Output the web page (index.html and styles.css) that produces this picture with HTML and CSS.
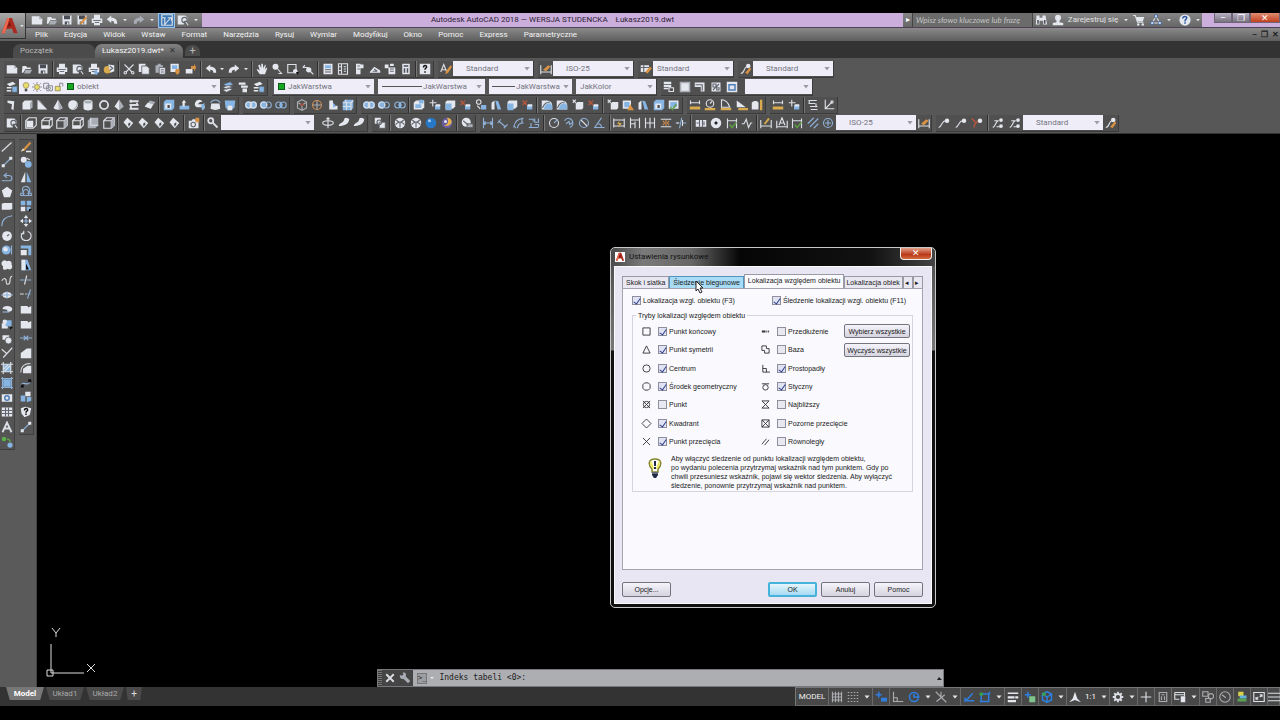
FILE: index.html
```
<!DOCTYPE html>
<html lang="pl">
<head>
<meta charset="utf-8">
<title>Autodesk AutoCAD 2018</title>
<link rel="stylesheet" href="styles.css">
</head>
<body>
<svg class="defs" aria-hidden="true">
<symbol id="new" viewBox="0 0 16 16"><path class="w" d="M1 3h10l4 4v7H1z"/><path class="g" d="M11 3v4h4z"/></symbol>
<symbol id="open" viewBox="0 0 16 16"><path class="w" d="M2 4h5l1 2h5v2H6l-3 5H1z"/><path class="g" d="M6 9h9l-3 5H4z"/></symbol>
<symbol id="save" viewBox="0 0 16 16"><path class="w" d="M2 2h12v12H2z"/><path class="d" d="M4 2h8v5H4zM5 10h6v4H5z"/><path class="w" d="M8 11h2v3H8z"/></symbol>
<symbol id="saveas" viewBox="0 0 16 16"><use href="#save"/><path class="o" d="M6 11L13 3l2 2-7 8-3 1z"/></symbol>
<symbol id="print" viewBox="0 0 16 16"><path class="w" d="M4 1h8v5h3v6h-3v3H4v-3H1V6h3z"/><path class="d" d="M3 8h10v1H3zM5 11h6v1H5z"/></symbol>
<symbol id="preview" viewBox="0 0 16 16"><path class="w" d="M1 2h10l3 3v4H9v5H1z"/><circle class="ld" cx="10" cy="8" r="3.5"/><path class="lw" d="M12 11l3 4"/></symbol>
<symbol id="ws" viewBox="0 0 16 16"><path class="lw" d="M1 1h14v14H1zM1 5h5M5 5v10M5 14l8-9M9 5h5v4"/></symbol>
<symbol id="publish" viewBox="0 0 16 16"><use href="#print"/><path class="b" d="M9 9h3v3h3l-4 4-4-4h2z"/></symbol>
<symbol id="globe" viewBox="0 0 16 16"><circle class="y" cx="6" cy="9" r="5"/><path class="w" d="M7 2l8 1v8l-5 2z"/><path class="ld" d="M9 4l4 3-4 3"/></symbol>
<symbol id="cut" viewBox="0 0 16 16"><path class="lw" d="M2 2l10 10M14 2L4 12"/><circle class="lw" cx="3" cy="13" r="1.6"/><circle class="lw" cx="13" cy="13" r="1.6"/></symbol>
<symbol id="copy" viewBox="0 0 16 16"><path class="w" d="M1 1h9v11H1z"/><path class="w e" d="M5 4h7l3 3v8H5z"/></symbol>
<symbol id="paste" viewBox="0 0 16 16"><path class="g" d="M2 3h3V1h4v2h3v10H2z"/><path class="w e" d="M7 6h8v9H7z"/><path class="ld" d="M9 9h4M9 12h4"/></symbol>
<symbol id="match" viewBox="0 0 16 16"><path class="w" d="M2 1h11v11H2z"/><path class="b" d="M4 3h7v5H4z"/><path class="o" d="M9 8h5v5l-3 3-3-4z"/></symbol>
<symbol id="blk" viewBox="0 0 16 16"><path class="w" d="M1 8h9v6H1z"/><path class="o" d="M8 4h4V1l3 5-3 5V8H8z"/></symbol>
<symbol id="undo" viewBox="0 0 16 16"><path class="w" d="M1 7l6-5v3c6 0 8 3 8 8h-4c0-3-1-4-4-4v3z"/></symbol>
<symbol id="redo" viewBox="0 0 16 16"><path class="w" d="M15 7L9 2v3c-6 0-8 3-8 8h4c0-3 1-4 4-4v3z"/></symbol>
<symbol id="redo-off" viewBox="0 0 16 16"><path class="g" d="M15 7L9 2v3c-6 0-8 3-8 8h4c0-3 1-4 4-4v3z"/></symbol>
<symbol id="arr" viewBox="0 0 16 16"><path class="w" d="M3 5h10l-5 6z"/></symbol>
<symbol id="hand" viewBox="0 0 16 16"><path class="w" d="M5 15L1 9l1-1 3 2-2-7 2-1 2 5V1h2l1 6 2-5 1 1-1 6 2-3 1 1-3 8z"/></symbol>
<symbol id="zoomp" viewBox="0 0 16 16"><circle class="w" cx="6" cy="5" r="4"/><path class="lw" d="M9 8l5 6M10 14h5"/></symbol>
<symbol id="zoomw" viewBox="0 0 16 16"><path class="lw" d="M1 2h11v11H1z"/><circle class="w" cx="11" cy="11" r="3"/><path class="k" d="M12 12h4l-2 4z"/></symbol>
<symbol id="zoomv" viewBox="0 0 16 16"><path class="lw" d="M1 6h7M1 6l3-3"/><circle class="w" cx="9" cy="9" r="3.5"/><path class="lw" d="M11 11l4 4"/></symbol>
<symbol id="props" viewBox="0 0 16 16"><path class="w" d="M2 1h12v14H2z"/><path class="b" d="M4 3h8v4H4z"/><path class="ld" d="M4 9h8M4 12h8"/></symbol>
<symbol id="dc" viewBox="0 0 16 16"><path class="lw" d="M2 1h12v14H2zM6 1v14M9 5h3M9 8h3M9 11h3M2 5h4M2 10h4"/></symbol>
<symbol id="tp" viewBox="0 0 16 16"><path class="w" d="M4 1h6v14H4zM10 2h4v5h-4z"/><path class="ld" d="M6 4h3M6 8h3"/></symbol>
<symbol id="sheet" viewBox="0 0 16 16"><path class="w" d="M1 12l6-7 8 5v3H1z"/><path class="ld" d="M5 11h6M7 8l4 3"/></symbol>
<symbol id="mark" viewBox="0 0 16 16"><path class="w" d="M6 6h9v9H6zM1 2h5v5H1zM8 1h5v3H8z"/><path class="ld" d="M8 8h5M8 11h5"/></symbol>
<symbol id="calc" viewBox="0 0 16 16"><path class="w" d="M3 1h10v14H3z"/><path class="d" d="M5 3h6v2H5zM5 7h2v6H5zM9 7h2v6H9z"/></symbol>
<symbol id="help" viewBox="0 0 16 16"><path class="w" d="M1 1h14v14H1z"/><path class="kl" d="M6 6c0-4 5-3 4 0-1 1-2 1-2 3M8 11v2"/></symbol>
<symbol id="sty" viewBox="0 0 16 16"><path class="lw" d="M1 12L5 2l4 10M2 9h6"/><path class="o" d="M8 11l6-8 2 2-5 8-4 2z"/></symbol>
<symbol id="dimsty" viewBox="0 0 16 16"><path class="lw" d="M1 3v12M15 3v12M1 12h14"/><path class="o" d="M4 9l7-6 3 2-6 6z"/></symbol>
<symbol id="tabsty" viewBox="0 0 16 16"><path class="w" d="M1 3h11v9H1z"/><path class="ld" d="M1 6h11M5 3v9"/><path class="o" d="M7 12l6-7 3 2-6 7z"/></symbol>
<symbol id="mlsty" viewBox="0 0 16 16"><path class="lw" d="M1 14c5 0 4-8 8-9"/><circle class="w" cx="11" cy="4" r="3"/><path class="o" d="M7 13l6-7 2 2-5 7z"/></symbol>
<symbol id="lay" viewBox="0 0 16 16"><path class="w" d="M1 4l8-3 4 3-8 3zM1 8h7v2H1zM1 12h6v2H1z"/><path class="b e" d="M8 7h7v8H8z"/></symbol>
<symbol id="lay2" viewBox="0 0 16 16"><path class="b e" d="M2 4l9-3 4 4-9 3z"/><path class="w e" d="M1 8l8-2 5 2-8 3zM1 12l8-3 5 2-8 4z"/></symbol>
<symbol id="bulb" viewBox="0 0 16 16"><path class="ye" d="M8 1c5 0 6 5 2 9H6C2 6 3 1 8 1z"/><path class="d" d="M6 11h4v4H6z"/></symbol>
<symbol id="sun" viewBox="0 0 16 16"><circle class="ye" cx="8" cy="8" r="4"/><path class="ll" d="M8 0v3M8 13v3M0 8h3M13 8h3M2 2l2 2M12 12l2 2M2 14l2-2M12 4l2-2"/></symbol>
<symbol id="frz" viewBox="0 0 16 16"><path class="ll" d="M1 2h8v8H1zM6 6h9v8H6z"/><circle class="ll" cx="10" cy="10" r="2"/></symbol>
<symbol id="lock" viewBox="0 0 16 16"><path class="ye" d="M2 7h8v7H2z"/><path class="ll" d="M9 8V2h5v5"/></symbol>
<symbol id="lst" viewBox="0 0 16 16"><path class="w" d="M1 2h9v3H1zM4 6h9v3H4zM6 10h6v5H6z"/></symbol>
<symbol id="lays" viewBox="0 0 16 16"><path class="w" d="M1 1h10v3H1zM1 5h10v3H1zM1 9h6v2H1z"/><path class="lw" d="M8 9h6v5H8z"/></symbol>
<symbol id="vp1" viewBox="0 0 16 16"><path class="g" d="M1 1h14v14H1z"/><path class="w" d="M3 3h10v10H3z"/></symbol>
<symbol id="vp2" viewBox="0 0 16 16"><path class="w" d="M1 2h13v12H9V8H1z"/><path class="ld" d="M2 5h9v8"/></symbol>
<symbol id="vp3" viewBox="0 0 16 16"><path class="w" d="M2 2h12v12H2z"/><path class="ld" d="M4 12l8-8M4 4h4v4H4zM9 9h3v3H9z"/></symbol>
<symbol id="vp4" viewBox="0 0 16 16"><path class="w" d="M1 1h14v14H1z"/><path fill="#4f7fb8" d="M3 4h10v9H3z"/><path class="w" d="M5 6h6v5H5z"/></symbol>
<symbol id="poly" viewBox="0 0 16 16"><path class="w" d="M2 2l9 1-1 12-3-2 1-6-6-2z"/></symbol>
<symbol id="box" viewBox="0 0 16 16"><path class="w" d="M2 5l3-3h10v9l-3 3H2z"/><path class="g" d="M12 5l3-3v9l-3 3z"/></symbol>
<symbol id="wedge" viewBox="0 0 16 16"><path class="w" d="M2 1l13 13H2z"/><path class="g" d="M2 1l3 1 10 12z"/></symbol>
<symbol id="cone" viewBox="0 0 16 16"><path class="w" d="M8 1l6 11c-2 3-10 3-12 0z"/><path class="g" d="M8 1l6 11c-1 2-3 2-5 2z"/></symbol>
<symbol id="sph" viewBox="0 0 16 16"><circle class="w" cx="8" cy="8" r="6.5"/><path class="g" d="M13 4c3 5-1 11-7 10 5-1 7-5 7-10z"/></symbol>
<symbol id="cyl" viewBox="0 0 16 16"><path class="w" d="M2 4c0-4 12-4 12 0v9c-2 3-10 3-12 0z"/><ellipse class="g" cx="8" cy="4" rx="5" ry="2"/></symbol>
<symbol id="tor" viewBox="0 0 16 16"><circle class="lw2" cx="8" cy="8" r="5.5"/></symbol>
<symbol id="pyr" viewBox="0 0 16 16"><path class="w" d="M8 1l6 9-6 5-6-5z"/><path class="g" d="M8 1l6 9-6 5z"/></symbol>
<symbol id="hel" viewBox="0 0 16 16"><path class="lw2" d="M2 3h12M2 8h12M2 13h12M4 1v4M12 5v4M4 9v5"/></symbol>
<symbol id="pla" viewBox="0 0 16 16"><path class="g" d="M1 10l7-8 7 2-6 9z"/><path class="w" d="M1 10l4-5 7 2-3 6z"/></symbol>
<symbol id="ext" viewBox="0 0 16 16"><path class="b" d="M1 4l3-3h11v11l-3 3H1z"/><path class="w" d="M3 6h8v7H3z"/><path class="d" d="M6 8h3v4H6z"/></symbol>
<symbol id="pp" viewBox="0 0 16 16"><path class="b" d="M2 9h13v5H2z"/><path class="w" d="M8 1l3 4H9v5H6V5H5z"/></symbol>
<symbol id="swp" viewBox="0 0 16 16"><path class="w" d="M2 4c2-4 8-4 9 0H8L5 7h6c5 1 4 7 0 8l1-4H4C0 9 1 6 2 4z"/><path class="b" d="M9 9l5-4v7l-3 3z"/></symbol>
<symbol id="rev" viewBox="0 0 16 16"><path class="w" d="M3 6h11l1 7c-4 2-9 2-13 0z"/><path class="lb" d="M2 5c3-5 10-5 13 0"/></symbol>
<symbol id="loft" viewBox="0 0 16 16"><path class="b" d="M1 2h14l-1 9-4 4H5l-3-4z"/><path class="w" d="M5 9h6v6H5z"/></symbol>
<symbol id="uni" viewBox="0 0 16 16"><circle class="b" cx="5" cy="8" r="5"/><circle class="b" cx="11" cy="8" r="5"/><circle class="lw" cx="5" cy="8" r="4"/><circle class="lw" cx="11" cy="8" r="4"/></symbol>
<symbol id="sub" viewBox="0 0 16 16"><circle class="b" cx="5" cy="8" r="5"/><circle class="lw" cx="5" cy="8" r="4"/><circle class="lb" cx="11" cy="8" r="4"/></symbol>
<symbol id="int" viewBox="0 0 16 16"><circle class="lb" cx="5" cy="8" r="4"/><circle class="lb" cx="11" cy="8" r="4"/><path class="b" d="M8 4c3 3 3 5 0 8-3-3-3-5 0-8z"/></symbol>
<symbol id="gmv" viewBox="0 0 16 16"><path class="lg" d="M8 1l6 3v8l-6 3-6-3V4zM8 8v6M8 8l5-3M8 8L3 5"/><path class="r" d="M6 6h4v3H6z"/></symbol>
<symbol id="gro" viewBox="0 0 16 16"><circle class="lo" cx="8" cy="8" r="6"/><path class="lg" d="M2 8h12M8 2v12"/></symbol>
<symbol id="ell" viewBox="0 0 16 16"><path class="w" d="M3 2h5v7h6v5H3z"/><path class="b" d="M8 5l3 3v3H8z"/></symbol>
<symbol id="arr3" viewBox="0 0 16 16"><path class="b" d="M1 4l3-3h11v11l-3 3H1z"/><path class="lw" d="M1 5h11v10M6 5v10M1 10h11M12 5l3-3M5 1v4"/></symbol>
<symbol id="fc1" viewBox="0 0 16 16"><path class="w" d="M1 5l3-3h11v9l-3 3H1z"/><path class="b" d="M3 7h8v5H3zM8 1h6v5H8z"/></symbol>
<symbol id="fc2" viewBox="0 0 16 16"><path class="lw" d="M5 1v9M1 5h9"/><path class="b" d="M8 8h7v6H8z"/><path class="w" d="M9 7h6v3H9z"/></symbol>
<symbol id="fc3" viewBox="0 0 16 16"><path class="w" d="M2 4l2-2h11v8l-3 3H2z"/><path class="b" d="M2 6h8v9H2z"/></symbol>
<symbol id="fc4" viewBox="0 0 16 16"><path class="lr" d="M2 2l6 6M8 2L2 8"/><path class="b" d="M8 8h7v6H8z"/><path class="w" d="M9 7h6v3H9z"/></symbol>
<symbol id="fc5" viewBox="0 0 16 16"><circle class="lw" cx="5" cy="4" r="3"/><path class="b" d="M8 8h7v6H8z"/><path class="lw" d="M3 9l4 4"/></symbol>
<symbol id="fc6" viewBox="0 0 16 16"><path class="w" d="M2 14V5l4-3v12z"/><path class="b" d="M7 2l4 1 4 11h-5z"/></symbol>
<symbol id="fil" viewBox="0 0 16 16"><path class="w" d="M1 2h7c5 0 7 4 7 7v5H1z"/><path class="b" d="M4 14C4 8 8 5 13 6l2 3v5z"/><path class="ld" d="M2 12C4 6 7 4 12 4"/></symbol>
<symbol id="shell" viewBox="0 0 16 16"><path class="lw" d="M1 1l4 4M5 1L1 5"/><path class="w" d="M5 6l2-2h8v8l-2 2H5z"/></symbol>
<symbol id="warn" viewBox="0 0 16 16"><path class="w" d="M1 2h11v11H1z"/><path class="b" d="M3 4h7v7H3z"/><path class="o" d="M11 7l5 8H7z"/></symbol>
<symbol id="chk" viewBox="0 0 16 16"><path class="w" d="M1 2h13v11H1z"/><path class="b" d="M3 4h9v7H3z"/><path class="lgr" d="M3 11l3 3 5-7"/></symbol>
<symbol id="dist" viewBox="0 0 16 16"><path class="lw" d="M2 2v5M14 2v5M2 5h12"/><path class="y" d="M1 10h14v4H1z"/></symbol>
<symbol id="rad" viewBox="0 0 16 16"><circle class="lw" cx="8" cy="6" r="5"/><path class="lw" d="M8 6l3-3"/><path class="y" d="M1 12h14v3H1z"/></symbol>
<symbol id="ang" viewBox="0 0 16 16"><path class="lw" d="M2 11V1c6 0 9 4 11 10z"/><path class="y" d="M1 12h14v3H1z"/></symbol>
<symbol id="area" viewBox="0 0 16 16"><path class="w" d="M1 11V2l12 9z"/><path class="y" d="M3 12h13v3H3z"/></symbol>
<symbol id="vol" viewBox="0 0 16 16"><path class="w" d="M1 5c2-3 8-3 9 0v9H1z"/><path class="y" d="M12 1h3v14h-3z"/></symbol>
<symbol id="list" viewBox="0 0 16 16"><path class="lw" d="M2 2h11M2 6h9M4 10h10M5 14h9M3 2v4M12 6v5"/></symbol>
<symbol id="ucs" viewBox="0 0 16 16"><path class="lw" d="M3 1v12h12M3 13L12 4"/><circle class="lw" cx="12" cy="4" r="1.5"/></symbol>
<symbol id="v1" viewBox="0 0 16 16"><path class="lw" d="M1 5l4-4h10v10l-4 4H1z"/><path class="w" d="M2 5h9v9H2z"/></symbol>
<symbol id="v2" viewBox="0 0 16 16"><path class="lw" d="M1 5l4-4h10v10l-4 4H1zM1 5h10v10M11 5l4-4"/><path class="w" d="M1 11h10v4H1z"/></symbol>
<symbol id="v3" viewBox="0 0 16 16"><path class="lw" d="M1 5l4-4h10v10l-4 4H1zM1 5h10v10M11 5l4-4"/><path class="g" d="M11 5l4-4v10l-4 4z"/></symbol>
<symbol id="v4" viewBox="0 0 16 16"><path class="g" d="M1 5l4-4h10v10l-4 4H1z"/><path class="lw" d="M5 1v10h10"/></symbol>
<symbol id="iso" viewBox="0 0 16 16"><path class="w" d="M7 1l8 7-6 7-7-8z"/><path class="d" d="M8 9l3-2v3l-2 3z"/></symbol>
<symbol id="cam" viewBox="0 0 16 16"><path class="w" d="M1 5h4l1-2h4v2h4v10H1z"/><circle class="ld" cx="7" cy="10" r="3"/><path class="o" d="M10 1h5v6h-5z"/></symbol>
<symbol id="mag" viewBox="0 0 16 16"><circle class="lw2" cx="5" cy="5" r="3.4"/><path class="lw2" d="M8 8l6 6"/></symbol>
<symbol id="orb" viewBox="0 0 16 16"><ellipse class="lw" cx="8" cy="8" rx="7" ry="3"/><path class="lw" d="M8 1v14M6 3l2-2 2 2"/></symbol>
<symbol id="fly" viewBox="0 0 16 16"><path class="w" d="M1 12c1-5 5-3 7-8l7-2c0 7-6 10-14 10z"/><circle class="w" cx="11" cy="4" r="3"/></symbol>
<symbol id="shp" viewBox="0 0 16 16"><path class="w" d="M1 1h8v8H1z"/><path class="w e" d="M7 7h8v8H7z"/><circle class="ld" cx="7" cy="7" r="3"/></symbol>
<symbol id="wire" viewBox="0 0 16 16"><circle class="w" cx="8" cy="8" r="7"/><path class="ld" d="M3 4c4 4 6 4 10 0M2 10c4-4 8-4 12 0M8 8v6"/></symbol>
<symbol id="blue" viewBox="0 0 16 16"><circle fill="#2878c8" cx="8" cy="8" r="7"/><circle fill="#9fcbf4" cx="6" cy="5" r="2"/></symbol>
<symbol id="real" viewBox="0 0 16 16"><circle fill="#695aa0" cx="8" cy="8" r="7"/><path fill="#e5b24d" d="M8 1c4 0 7 3 6 7-2 4-7 5-10 3 5 0 7-5 4-10z"/><circle class="w" cx="6" cy="6" r="2"/></symbol>
<symbol id="msph" viewBox="0 0 16 16"><circle class="w" cx="7" cy="7" r="6"/><path class="g e" d="M8 9h8v5H8z"/><path class="ld" d="M3 5l7 6"/></symbol>
<symbol id="dlin" viewBox="0 0 16 16"><path class="lb" d="M2 1v14M14 1v14M2 8h12M5 6L2 8l3 2M11 6l3 2-3 2"/></symbol>
<symbol id="dali" viewBox="0 0 16 16"><path class="lb" d="M2 5l9 8M1 8l4-5M9 15l5-5"/></symbol>
<symbol id="darc" viewBox="0 0 16 16"><path class="lb" d="M1 14C2 7 6 2 14 2M6 15c0-4 3-7 8-7M1 11l3 4M12 1v7"/></symbol>
<symbol id="dord" viewBox="0 0 16 16"><path class="lb" d="M1 3h6v3M4 8v6M1 14h13M9 2v5h5V2M9 10h5v3"/></symbol>
<symbol id="drad" viewBox="0 0 16 16"><circle class="lw" cx="8" cy="8" r="6"/><path class="lb" d="M8 8l5-5"/></symbol>
<symbol id="djog" viewBox="0 0 16 16"><path class="lb" d="M2 5c4-6 12-3 11 5-1 2-2 4-4 4M4 9l4-3 1 4 4-3"/></symbol>
<symbol id="ddia" viewBox="0 0 16 16"><circle class="lb" cx="8" cy="8" r="6"/><path class="lw" d="M4 4l8 8"/></symbol>
<symbol id="dang" viewBox="0 0 16 16"><path class="lb" d="M14 14H1L10 1M5 9c3 0 5 2 5 5"/></symbol>
<symbol id="dq" viewBox="0 0 16 16"><path class="lw" d="M1 2v12M15 2v12M1 4h14M1 12h14"/><path class="y" d="M9 5L5 9h3l-1 5 5-6H8z"/></symbol>
<symbol id="dbas" viewBox="0 0 16 16"><path class="lw" d="M2 1v14M14 1v14M8 6v9M2 4h12M2 9h6"/></symbol>
<symbol id="dcon" viewBox="0 0 16 16"><path class="lw" d="M2 1v14M8 1v14M14 1v14M2 8h12"/></symbol>
<symbol id="dsp" viewBox="0 0 16 16"><path class="lw" d="M1 3h14M1 13h14"/><path class="lo" d="M4 5l2 3-2 3M12 5l-2 3 2 3M8 4v8"/></symbol>
<symbol id="dbrk" viewBox="0 0 16 16"><path class="lb" d="M9 1L6 15M1 8h5M10 8h5"/><path class="lw" d="M2 8h3M10 4v8"/></symbol>
<symbol id="tol" viewBox="0 0 16 16"><path class="w" d="M1 4h14v9H1z"/><path class="ld" d="M6 4v9M10 4v9M2 8h3M12 6v5"/></symbol>
<symbol id="cen" viewBox="0 0 16 16"><circle class="w" cx="8" cy="8" r="7"/><path class="kl" d="M8 6v4M6 8h4"/></symbol>
<symbol id="insp" viewBox="0 0 16 16"><path class="lw" d="M2 2v13M14 2v13M2 5h12"/><path class="lgr" d="M5 10l3 4 6-7"/></symbol>
<symbol id="jl" viewBox="0 0 16 16"><path class="lw" d="M1 9h3l3-6 3 11 3-6h2"/></symbol>
<symbol id="ded" viewBox="0 0 16 16"><path class="lw" d="M1 4v11M15 4v11M1 12h14"/><path class="y" d="M5 9l6-8 2 2-6 7z"/></symbol>
<symbol id="dte" viewBox="0 0 16 16"><path class="lw" d="M1 5v10M15 5v10M1 13h14M4 11l4-10 4 10M6 8h5"/></symbol>
<symbol id="obl" viewBox="0 0 16 16"><path class="lb" d="M1 9l8-8M4 13L15 2M9 15l6-6"/></symbol>
<symbol id="cir" viewBox="0 0 16 16"><circle class="lb" cx="8" cy="8" r="6"/><path class="lb" d="M4 8h8M8 4v8"/></symbol>
<symbol id="ml" viewBox="0 0 16 16"><path class="lw" d="M1 14c5-2 4-9 9-9"/><circle class="w" cx="12" cy="5" r="3"/></symbol>
<symbol id="mlr" viewBox="0 0 16 16"><path class="lr" d="M1 2l5 5M4 14c1-6 3-8 7-9"/><circle class="w" cx="12" cy="5" r="3"/></symbol>
<symbol id="mlc" viewBox="0 0 16 16"><path class="lw" d="M1 14c4-2 3-6 7-9M3 5h6M6 13h5"/><circle class="w" cx="12" cy="4" r="2.5"/><circle class="w" cx="12" cy="12" r="2.5"/></symbol>
<symbol id="line" viewBox="0 0 16 16"><path class="lw" d="M1 14L14 2"/></symbol>
<symbol id="xl" viewBox="0 0 16 16"><path class="lb" d="M3 13L13 3"/><path class="w" d="M1 11h4v4H1zM11 1h4v4h-4z"/></symbol>
<symbol id="pl" viewBox="0 0 16 16"><path class="lb" d="M1 13h9c6 0 6-7 0-7H6M8 3L4 6l4 3"/></symbol>
<symbol id="pent" viewBox="0 0 16 16"><path class="w" d="M8 1l7 5-3 9H4L1 6z"/></symbol>
<symbol id="rect" viewBox="0 0 16 16"><path class="w" d="M1 5l3-1h11v8l-3 1H1z"/></symbol>
<symbol id="arc" viewBox="0 0 16 16"><path class="lb" d="M1 15C1 7 6 2 15 1"/></symbol>
<symbol id="cloud" viewBox="0 0 16 16"><path class="w" d="M2 3c3-3 5 0 6 0 3-2 7 0 6 4 3 5-2 9-5 6-4 3-8 1-6-3-3-2-3-5-1-7z"/></symbol>
<symbol id="circ" viewBox="0 0 16 16"><circle class="w" cx="8" cy="8" r="6.5"/><path class="ld" d="M8 8l3-2"/></symbol>
<symbol id="circ2" viewBox="0 0 16 16"><circle class="b" cx="7" cy="8" r="6"/><circle class="w" cx="6" cy="7" r="3"/><path class="lb" d="M14 2v12"/></symbol>
<symbol id="spl" viewBox="0 0 16 16"><path class="lw" d="M1 9c3-5 6-3 6 1 0 6 5 4 5-1 0-4 1-6 3-6"/></symbol>
<symbol id="elp" viewBox="0 0 16 16"><ellipse class="w" cx="8" cy="8" rx="6" ry="4"/><path class="lb" d="M0 8h16M8 3v10"/></symbol>
<symbol id="elp2" viewBox="0 0 16 16"><path class="w" d="M2 8c0-6 13-5 13 0 0 3-3 4-6 4l-1-3z"/><path class="lb" d="M2 12h9"/></symbol>
<symbol id="ins" viewBox="0 0 16 16"><path class="w" d="M1 7h8v7H1z"/><path class="b" d="M6 3h8v8H6z"/><circle class="w" cx="5" cy="5" r="3"/><path class="k" d="M12 12h4l-4 4z"/></symbol>
<symbol id="mkb" viewBox="0 0 16 16"><path class="w" d="M2 3h9v6H2z"/><circle class="w e" cx="10" cy="10" r="4.5"/></symbol>
<symbol id="ray" viewBox="0 0 16 16"><path class="lw" d="M1 3l7 6M15 1L3 14"/></symbol>
<symbol id="hat" viewBox="0 0 16 16"><path class="b" d="M3 3h10v10H3z"/><path class="lw" d="M3 0v16M13 0v16M0 3h16M0 13h16M4 9l5-5M5 12l7-7"/></symbol>
<symbol id="grd" viewBox="0 0 16 16"><path class="b" d="M3 3h10v10H3z"/><path class="lb" d="M2 0v16M14 0v16M0 2h16M0 14h16"/></symbol>
<symbol id="reg" viewBox="0 0 16 16"><path class="w" d="M1 3h14v10H1z"/><circle fill="#4f7fb8" cx="8" cy="8" r="4"/><circle class="w" cx="8" cy="8" r="2"/></symbol>
<symbol id="tbl" viewBox="0 0 16 16"><path class="w" d="M1 2h14v12H1z"/><path class="ld" d="M1 6h14M1 10h14M6 2v12M10 2v12"/></symbol>
<symbol id="txt" viewBox="0 0 16 16"><path class="lw2" d="M2 15L8 2l6 13M4 10h8"/></symbol>
<symbol id="pts" viewBox="0 0 16 16"><circle fill="#5cb04a" cx="4" cy="4" r="3"/><circle class="b" cx="12" cy="12" r="3.5"/><path class="lgr" d="M8 4c3 0 4 1 4 4"/></symbol>
<symbol id="ers" viewBox="0 0 16 16"><path class="o" d="M1 14L13 1l2 2L6 13z"/><path class="w" d="M1 14l3-4 2 2zM8 13h7v2H8z"/></symbol>
<symbol id="cpy" viewBox="0 0 16 16"><circle class="w" cx="5" cy="5" r="4"/><circle class="b" cx="11" cy="11" r="4.5"/><path class="lw" d="M9 3l4 2"/></symbol>
<symbol id="mir" viewBox="0 0 16 16"><path class="w" d="M7 1v14H1z"/><path class="b" d="M9 1v14h6z"/></symbol>
<symbol id="off" viewBox="0 0 16 16"><path class="lb" d="M1 14h14v-3h-4c5-4 0-10-4-9-4 0-5 5-2 9H1zM5 14c-2-5 0-8 3-8s5 4 3 8"/></symbol>
<symbol id="arry" viewBox="0 0 16 16"><path class="w" d="M1 9h6v6H1z"/><path class="b" d="M1 1h6v6H1zM9 1h6v6H9zM9 9h5v5H9z"/><path class="k" d="M12 12h4l-4 4z"/></symbol>
<symbol id="move" viewBox="0 0 16 16"><path class="lb" d="M3 8h10M8 3v10"/><path class="w" d="M8 0l3 4H5zM8 16l3-4H5zM0 8l4-3v6zM16 8l-4-3v6z"/></symbol>
<symbol id="rot" viewBox="0 0 16 16"><path class="lw" d="M5 3c-6 4-3 11 3 11 8 0 9-10 2-12M5 1v4H1"/></symbol>
<symbol id="scl" viewBox="0 0 16 16"><path class="b" d="M1 2h14v13h-4V6H1z"/><path class="w" d="M1 8h8v7H1z"/></symbol>
<symbol id="str" viewBox="0 0 16 16"><path class="b" d="M2 1h8l5 14H2z"/><path class="w" d="M2 1h5v14H2z"/><path class="k" d="M8 6l4 8H8z"/></symbol>
<symbol id="trim" viewBox="0 0 16 16"><path class="lb" d="M0 8h6M9 8h6"/><path class="lw" d="M9 2L6 14"/></symbol>
<symbol id="extd" viewBox="0 0 16 16"><path class="lw" d="M0 8h5M7 8h2"/><path class="lb" d="M14 2l-4 12M10 8h4"/></symbol>
<symbol id="brk" viewBox="0 0 16 16"><path class="w" d="M1 4h9l1 2 4-2v10H1z"/></symbol>
<symbol id="join" viewBox="0 0 16 16"><path class="lb" d="M0 8h16M5 5l3 3-3 3M11 5L8 8l3 3"/></symbol>
<symbol id="cham" viewBox="0 0 16 16"><path class="w" d="M1 15V8l8-6h6v13z"/></symbol>
<symbol id="filt" viewBox="0 0 16 16"><path class="w" d="M4 15V9l6-4h5v10z"/><path class="lw" d="M1 14C1 6 6 2 14 2"/></symbol>
<symbol id="bld" viewBox="0 0 16 16"><path class="lb" d="M1 12c3-9 10 3 13-7"/><path class="k" d="M1 10h4v4H1zM11 3h4v4h-4z"/></symbol>
<symbol id="expl" viewBox="0 0 16 16"><path class="w" d="M7 1h7v6H7z"/><path class="b" d="M1 6h6v8H1zM9 8h6v5l-6 2z"/></symbol>
<symbol id="xq" viewBox="0 0 16 16"><path class="w" d="M1 3l6-2 8 2-2 9-7 3-4-5z"/><path class="kl" d="M6 6c0-4 5-3 4 0-1 1-2 1-2 3M8 10v2"/></symbol>
<symbol id="grid" viewBox="0 0 16 16"><path class="lg" d="M2 1v14M6 1v14M10 1v14M14 1v14M1 4h14M1 8h14M1 12h14"/></symbol>
<symbol id="dots" viewBox="0 0 16 16"><path class="ldot" d="M1 2h14M1 6h14M1 10h14M1 14h14"/></symbol>
<symbol id="dyn" viewBox="0 0 16 16"><path class="ls" d="M5 1v8M1 5h8"/><path class="s" d="M8 9h8v5H8z"/></symbol>
<symbol id="ort" viewBox="0 0 16 16"><path class="lg" d="M2 1v13h13M2 9h5v5"/></symbol>
<symbol id="pol" viewBox="0 0 16 16"><circle class="ls" cx="8" cy="8" r="6"/><path class="ls" d="M8 4v4h7"/></symbol>
<symbol id="isod" viewBox="0 0 16 16"><path class="lg" d="M1 1l14 14M8 1v6M13 5L2 14"/></symbol>
<symbol id="otr" viewBox="0 0 16 16"><path class="ls" d="M1 13h14M4 13L13 3M2 9l3 4"/></symbol>
<symbol id="osn" viewBox="0 0 16 16"><path class="ls" d="M3 4h10v10H3zM14 1v3M1 14h4"/><circle fill="#39a04a" cx="3" cy="4" r="2.5"/></symbol>
<symbol id="lwt" viewBox="0 0 16 16"><path class="w" d="M1 2h14v2H1zM1 7h9v3H1zM11 7h4v3h-4zM1 12h11v3H1z"/></symbol>
<symbol id="cyc" viewBox="0 0 16 16"><path class="ls" d="M5 1v8M1 5h8"/><path fill="#7fc48d" d="M7 7h8v8H7z"/></symbol>
<symbol id="cub" viewBox="0 0 16 16"><path class="ls" d="M8 1l6 3v8l-6 3-6-3V4zM2 4l6 4 6-4M8 8v7"/><circle fill="#39a04a" cx="4" cy="4" r="2.5"/></symbol>
<symbol id="ann" viewBox="0 0 16 16"><path class="w" d="M8 1l3 9 5 5-8-3-8 3 5-5z"/></symbol>
<symbol id="gear" viewBox="0 0 16 16"><circle class="lw2" cx="8" cy="8" r="4"/><path class="lw2" d="M8 1v3M8 12v3M1 8h3M12 8h3M3 3l2 2M11 11l2 2M3 13l2-2M11 5l2-2"/></symbol>
<symbol id="plus" viewBox="0 0 16 16"><path class="lw" d="M8 1v14M1 8h14"/></symbol>
<symbol id="unit" viewBox="0 0 16 16"><path class="lg" d="M3 2h10v12H3zM6 5h4M6 7v5M10 7v5"/></symbol>
<symbol id="qp" viewBox="0 0 16 16"><path class="lw" d="M1 2h13v5M1 2v9h6M1 5h12"/><path class="w" d="M9 7h6v8H9z"/></symbol>
<symbol id="isol" viewBox="0 0 16 16"><path class="lg" d="M1 1h7v6H1zM5 10h6v5H5z"/><circle class="lg" cx="12" cy="7" r="3.5"/></symbol>
<symbol id="perf" viewBox="0 0 16 16"><circle class="lg" cx="8" cy="8" r="7"/><path class="lg" d="M4 5l5 4"/></symbol>
<symbol id="hw" viewBox="0 0 16 16"><path fill="#d9d34a" d="M3 1h7v6H3z"/><path fill="#61b2dd" d="M5 6h9v4H5z"/><path fill="#58a152" d="M2 10h12v4H2z"/></symbol>
<symbol id="full" viewBox="0 0 16 16"><path class="lw" d="M1 2h14v12H1zM4 11l3-3M12 5L9 8M9 5h3v3M4 8v3h3"/></symbol>
<symbol id="burg" viewBox="0 0 16 16"><path class="lw" d="M0 3h16M0 8h16M0 13h16"/></symbol>
<symbol id="wrench" viewBox="0 0 16 16"><path class="g" d="M1 4l3 1 2-2-1-2c4-1 5 2 4 5l6 6-3 3-6-6C3 10 1 8 1 4z"/></symbol>
<symbol id="x" viewBox="0 0 16 16"><path class="lw2" d="M3 3l10 10M13 3L3 13"/></symbol>
<symbol id="bino" viewBox="0 0 16 16"><path class="w" d="M2 2h4v3h4V2h4l2 12h-5V9H6v5H1z"/><path class="d" d="M3 8h2v5H3zM12 8h2v5h-2z"/></symbol>
<symbol id="user" viewBox="0 0 16 16"><circle class="w" cx="8" cy="5" r="4"/><path class="w" d="M6 8h4v3l5 1v3H1v-3l5-1z"/></symbol>
<symbol id="cart" viewBox="0 0 16 16"><path class="lw" d="M0 2h3l3 9h8"/><path class="w" d="M4 4h11l-2 6H6z"/><circle class="w" cx="7" cy="14" r="1.6"/><circle class="w" cx="13" cy="14" r="1.6"/></symbol>
<symbol id="a360" viewBox="0 0 16 16"><path class="lw" d="M8 3l5 9H3z"/><path fill="#c3d6f0" stroke="#3c5c8c" d="M6 1h4v4H6zM1 10h4v4H1zM11 10h4v4h-4z"/></symbol>
<symbol id="hlp" viewBox="0 0 16 16"><circle class="w" cx="8" cy="8" r="7.5"/><path fill="none" stroke="#2c55a0" stroke-width="2" d="M5 6c0-4 7-3 5 0-1 2-2 1-2 4M8 11v2"/></symbol>
<symbol id="logo" viewBox="0 0 24 24"><path fill="#ab2a1f" d="M2 21L9 2h6l7 19h-5l-2-6-8 1-1 5z"/><path fill="#ed6a50" d="M2 21L9 2h3L6 21z"/><path fill="#7e1712" d="M9 13l3-7 2 6z"/></symbol>
</svg>

<header class="top">
  <button class="app" aria-label="Menu aplikacji"><svg><use href="#logo"/></svg><svg class="tiny"><use href="#arr"/></svg></button>
  <div class="titlebar">
    <div class="tools qat" data-tools="new open save saveas print undo arr redo-off arr ws! preview arr"></div>
    <h1><span>Autodesk AutoCAD 2018 — WERSJA STUDENCKA</span><span>Łukasz2019.dwt</span></h1>
    <div class="info">
      <button class="play" aria-label="Rozwiń">▸</button>
      <input class="search" aria-label="Szukaj" placeholder="Wpisz słowo kluczowe lub frazę">
      <div class="tools" data-tools="bino user"></div>
      <button class="login">Zarejestruj się</button>
      <div class="tools help" data-tools="arr cart a360 arr | hlp arr"></div>
    </div>
    <div class="winbtns"><button aria-label="Minimalizuj">–</button><button aria-label="Przywróć">❐</button><button class="red" aria-label="Zamknij">✕</button></div>
  </div>
  <nav class="menu">
    <button>Plik</button><button>Edycja</button><button>Widok</button><button>Wstaw</button><button>Format</button><button>Narzędzia</button><button>Rysuj</button><button>Wymiar</button><button>Modyfikuj</button><button>Okno</button><button>Pomoc</button><button>Express</button><button>Parametryczne</button>
    <span class="docbtns"><button aria-label="Minimalizuj rysunek">–</button><button aria-label="Przywróć rysunek">❐</button><button aria-label="Zamknij rysunek">✕</button></span>
  </nav>
</header>
<div class="doctabs">
  <button class="doctab">Początek</button>
  <button class="doctab on">Łukasz2019.dwt* <span>✕</span></button>
  <button class="doctab add" aria-label="Nowy rysunek">+</button>
</div>
<section class="bars">
  <div class="row">
    <div class="bar tools std" data-tools="new open save | print preview publish globe | cut copy paste match blk | undo arr redo arr | hand zoomp zoomw zoomv | props dc tp sheet mark calc | help"></div>
    <div class="bar"><div class="tools one" data-tools="sty"></div><span class="combo"><select aria-label="Styl tekstu"><option>Standard</option></select></span></div>
    <div class="bar"><div class="tools one" data-tools="dimsty"></div><span class="combo"><select aria-label="Styl wymiarowania"><option>ISO-25</option></select></span></div>
    <div class="bar"><div class="tools one" data-tools="tabsty"></div><span class="combo near"><select aria-label="Styl tabeli"><option>Standard</option></select></span></div>
    <div class="bar"><div class="tools one" data-tools="mlsty"></div><span class="combo"><select aria-label="Styl wielolinii"><option>Standard</option></select></span></div>
  </div>
  <div class="row">
    <div class="bar"><div class="tools one" data-tools="lay"></div>
      <span class="combo layer"><span class="mark"><svg><use href="#bulb"/></svg><svg><use href="#sun"/></svg><svg><use href="#frz"/></svg><svg><use href="#lock"/></svg><i class="sw"></i></span><select aria-label="Warstwa"><option>obiekt</option></select></span>
      <div class="tools three" data-tools="lay2 lst lay"></div></div>
    <div class="bar props"><span class="combo color"><span class="mark"><i class="sw"></i></span><select aria-label="Kolor"><option>JakWarstwa</option></select></span>
      <span class="combo ltype"><span class="mark"><i class="ln"></i></span><select aria-label="Rodzaj linii"><option>JakWarstwa</option></select></span>
      <span class="combo lweight"><span class="mark"><i class="ln"></i></span><select aria-label="Szerokość linii"><option>JakWarstwa</option></select></span>
      <span class="combo near"><select aria-label="Styl wydruku"><option>JakKolor</option></select></span></div>
    <div class="bar vports"><div class="tools five" data-tools="lays vp1 vp2 vp3 vp4"></div><span class="combo vp"><select aria-label="Skala rzutni"><option></option></select></span></div>
  </div>
  <div class="row">
    <div class="bar tools solids" data-tools="poly box wedge cone sph cyl tor pyr hel pla | ext pp swp rev loft"></div>
    <div class="bar tools three" data-tools="uni sub int"></div>
    <div class="bar tools four" data-tools="gmv gro ell arr3"></div>
    <div class="bar tools edit" data-tools="uni sub int | fc1 fc2 fc3 fc4 fc5 fc6 fc3 fc4 | fil fil shell fc4 | shell warn fc6 ext chk"></div>
    <div class="bar tools five" data-tools="dist rad ang area vol"></div>
    <div class="bar tools inq" data-tools="dist fc2 | list ucs"></div>
  </div>
  <div class="row">
    <div class="bar views-bar"><div class="tools views" data-tools="preview | v1 v2 v3 v2 v4 v3 | iso iso iso iso | cam | mag"></div><span class="combo wide"><select aria-label="Widok"><option></option></select></span><div class="tools three" data-tools="orb fly fly"></div></div>
    <div class="bar tools vis" data-tools="shp | wire wire blue real | msph"></div>
    <div class="bar"><div class="tools dims" data-tools="dlin dali darc dord | drad djog ddia dang | dq dbas dcon dsp dbrk | tol cen insp jl | ded dte insp obl cir"></div><span class="combo"><select aria-label="Styl wymiaru"><option>ISO-25</option></select></span><div class="tools one" data-tools="dimsty"></div></div>
    <div class="bar"><div class="tools lead" data-tools="ml ml mlr | mlc mlc"></div><span class="combo"><select aria-label="Styl odnośnika"><option>Standard</option></select></span><div class="tools one" data-tools="mlsty"></div></div>
  </div>
</section>
<main>
  <aside>
    <div class="tools vert draw" data-tools="line xl pl pent rect arc circ circ2 cloud spl elp elp2 ins mkb ray hat grd reg tbl txt pts"></div>
    <div class="tools vert modify" data-tools="ers cpy mir off arry move rot scl str trim extd brk brk join cham filt bld expl xq xl"></div>
  </aside>
  <section class="canvas">
    <svg class="axes" viewBox="0 0 54 52" aria-hidden="true"><path d="M7 16v29M7 45h33M3 42h6v6H3zM8 0l4 5 4-5M12 5v4M43 36l8 8M51 36l-8 8"/></svg>
    <section class="dialog" role="dialog" aria-label="Ustawienia rysunkowe">
      <header><svg><use href="#logo"/></svg><h2>Ustawienia rysunkowe</h2><button class="close" aria-label="Zamknij">✕</button></header>
      <div class="body">
        <div class="tabs" role="tablist"><button role="tab">Skok i siatka</button><button role="tab" class="hot">Śledzenie biegunowe</button><button role="tab" class="sel" aria-selected="true">Lokalizacja względem obiektu</button><button role="tab" class="clip">Lokalizacja obiek</button><button class="nav" aria-label="Wstecz">◂</button><button class="nav" aria-label="Dalej">▸</button></div>
        <div class="pane">
          <div class="heads"><label><input type="checkbox" checked>Lokalizacja wzgl. obiektu (F3)</label><label><input type="checkbox" checked>Śledzenie lokalizacji wzgl. obiektu (F11)</label></div>
          <fieldset><legend>Tryby lokalizacji względem obiektu</legend>
            <div class="modes">
              <ul>
                <li><svg viewBox="0 0 10 10"><path d="M1 1h8v8H1z"/></svg><label><input type="checkbox" checked>Punkt końcowy</label></li>
                <li><svg viewBox="0 0 10 10"><path d="M5 1l4 8H1z"/></svg><label><input type="checkbox" checked>Punkt symetrii</label></li>
                <li><svg viewBox="0 0 10 10"><circle cx="5" cy="5" r="4"/></svg><label><input type="checkbox" checked>Centrum</label></li>
                <li><svg viewBox="0 0 10 10"><path d="M3 1h4l2 2v4L7 9H3L1 7V3z"/></svg><label><input type="checkbox" checked>Środek geometryczny</label></li>
                <li><svg viewBox="0 0 10 10"><circle cx="5" cy="5" r="3.5"/><path d="M1 1l8 8M9 1L1 9"/></svg><label><input type="checkbox">Punkt</label></li>
                <li><svg viewBox="0 0 10 10"><path d="M5 0l5 5-5 5-5-5z"/></svg><label><input type="checkbox" checked>Kwadrant</label></li>
                <li><svg viewBox="0 0 10 10"><path d="M1 1l8 8M9 1L1 9"/></svg><label><input type="checkbox" checked>Punkt przecięcia</label></li>
              </ul>
              <ul>
                <li><svg viewBox="0 0 10 10"><path d="M1 5h4M6 5h1M8 5h1" stroke-width="2"/></svg><label><input type="checkbox">Przedłużenie</label></li>
                <li><svg viewBox="0 0 10 10"><path d="M1 1h5v3h3v5H4V6H1z"/></svg><label><input type="checkbox">Baza</label></li>
                <li><svg viewBox="0 0 10 10"><path d="M2 1v8h8M2 5h4v4"/></svg><label><input type="checkbox" checked>Prostopadły</label></li>
                <li><svg viewBox="0 0 10 10"><circle cx="5" cy="6" r="3"/><path d="M1 2h8"/></svg><label><input type="checkbox" checked>Styczny</label></li>
                <li><svg viewBox="0 0 10 10"><path d="M1 1h8L1 9h8z"/></svg><label><input type="checkbox">Najbliższy</label></li>
                <li><svg viewBox="0 0 10 10"><path d="M1 1h8v8H1zM1 1l8 8M9 1L1 9"/></svg><label><input type="checkbox">Pozorne przecięcie</label></li>
                <li><svg viewBox="0 0 10 10"><path d="M1 8l5-6M4 9l5-6"/></svg><label><input type="checkbox">Równoległy</label></li>
              </ul>
              <div class="all"><button>Wybierz wszystkie</button><button>Wyczyść wszystkie</button></div>
            </div>
            <div class="tip"><svg viewBox="0 0 14 20"><path fill="#fff" stroke="#86862e" stroke-width="1.5" d="M7 1c7 0 7 6 3 10v3H4v-3C0 7 0 1 7 1z"/><path fill="#f2e94e" d="M3 3c-2 3 0 5 2 8h1L4 5zM11 3c2 3 0 5-2 8H8l2-6z"/><path fill="#222a44" d="M6 3h2v5H6zM6 9h2v2H6zM4 14h6v3l-2 3H6l-2-3z"/><path stroke="#aaa" d="M4 15h6"/></svg>
            <p>Aby włączyć śledzenie od punktu lokalizacji względem obiektu,<br>po wydaniu polecenia przytrzymaj wskaźnik nad tym punktem. Gdy po<br>chwili przesuniesz wskaźnik, pojawi się wektor śledzenia. Aby wyłączyć<br>śledzenie, ponownie przytrzymaj wskaźnik nad punktem.</p></div>
          </fieldset>
        </div>
        <footer><button class="opt">Opcje...</button><button class="ok">OK</button><button>Anuluj</button><button>Pomoc</button></footer>
      </div>
      <svg class="cursor" viewBox="0 0 10 14" aria-hidden="true"><path d="M1 1v10l2-2 2 4 2-1-2-4h3z"/></svg>
    </section>
    <div class="cmd"><span class="grip"></span><div class="tools" data-tools="x wrench"></div><label for="c"><span>&gt;_</span><svg class="tiny"><use href="#arr"/></svg></label><input id="c" aria-label="Wiersz poleceń" value="Indeks tabeli &lt;0&gt;:"><svg class="up" viewBox="0 0 7 7"><path d="M1 5h5L3 2z"/></svg></div>
  </section>
</main>
<footer class="status">
  <div class="layouts"><button class="on">Model</button><button>Układ1</button><button>Układ2</button><button aria-label="Nowy układ">+</button></div>
  <div class="tray"><button class="model">MODEL</button><div class="tools" data-tools="grid dots arr"></div><div class="tools" data-tools="dyn"></div><div class="tools" data-tools="ort pol arr isod arr"></div><div class="tools" data-tools="otr osn arr"></div><div class="tools" data-tools="lwt"></div><div class="tools" data-tools="cyc"></div><div class="tools" data-tools="cub arr"></div><div class="scale"><div class="tools" data-tools="ann"></div><button>1:1</button><div class="tools" data-tools="arr"></div></div><div class="tools" data-tools="gear arr"></div><div class="tools" data-tools="plus"></div><div class="tools" data-tools="unit"></div><div class="tools" data-tools="qp arr"></div><div class="tools" data-tools="isol"></div><div class="tools" data-tools="perf"></div><div class="tools" data-tools="hw"></div><div class="tools" data-tools="full"></div><div class="tools last" data-tools="burg"></div></div>
</footer>
<script src="toolbars.js"></script>
</body>
</html>
```
FILE: toolbars.js
```
// Fills each toolbar with icon buttons: "|" is a separator, "!" marks a pressed tool.
document.querySelectorAll('[data-tools]').forEach(function (bar) {
  bar.innerHTML = bar.dataset.tools.split(' ').map(function (name) {
    if (name === '|') return '<span class="sep"></span>';
    var id = name.replace('!', '');
    var cls = id === 'arr' ? 'drop' : name === id ? '' : 'pressed';
    return '<button class="' + cls + '" aria-label="' + id + '"><svg><use href="#' + id + '"/></svg></button>';
  }).join('');
});
```
FILE: styles.css
```
* { box-sizing: border-box; }
html, body { height: 100%; margin: 0; }
body { display: flex; flex-direction: column; padding: 13px 0 14px; background: #000; font: 8px/12px Roboto, "Open Sans", sans-serif; color: #e2e2e2; overflow: hidden; }
button { font: inherit; color: inherit; background: none; border: 0; padding: 0; margin: 0; white-space: nowrap; }
input, select { font: inherit; color: inherit; margin: 0; }
.defs { position: absolute; width: 0; height: 0; }

.w { fill: #e4e7ee; } .g { fill: #a9adb5; } .d { fill: #4a4d55; } .k { fill: #111; } .b { fill: #86b5e3; }
.y { fill: #d9ab4c; } .o { fill: #d89243; } .r { fill: #a8452f; } .s { fill: #2e7fe0; } .e { stroke: #53555a; }
.ye { fill: #e8dc6c; stroke: #75703a; }
.lw, .lw2, .ld, .lb, .lg, .ll, .lo, .lr, .ls, .kl, .lgr, .ldot { fill: none; stroke: #dcdfe6; stroke-width: 1.5; }
.lw2 { stroke-width: 2.4; } .ld { stroke: #63666e; } .lb { stroke: #8fb0d6; } .lg { stroke: #aaacb0; }
.ll { stroke: #85858f; } .lo { stroke: #cf8a4a; } .lr { stroke: #b3573e; stroke-width: 2; } .ls { stroke: #2e7fe0; stroke-width: 2; }
.kl { stroke: #111; stroke-width: 2; } .lgr { stroke: #5f9d45; stroke-width: 2; } .ldot { stroke: #aaacb0; stroke-dasharray: 2 2; }

.tools { display: flex; align-items: center; }
.tools button { flex: 1 1 0; min-width: 0; height: 15px; display: flex; align-items: center; justify-content: center; }
.tools svg { width: 12px; height: 12px; display: block; flex: none; }
.tools .drop { flex: 0 0 8px; }
.tools .drop svg, .tiny { width: 6px; height: 6px; }
.sep { flex: 0 0 4px; height: 16px; background: linear-gradient(90deg, transparent 1px, #2f2f2f 1px 2px, #777 2px 3px, transparent 3px); }

.top { flex: none; display: grid; grid-template: 15px 13px / 26px 1fr; background: linear-gradient(#8d8d8d 14px, #8a8a8a 15px, #5e5e5e); }
.app { grid-row: 1 / 3; height: 26px; display: flex; align-items: center; background: linear-gradient(#a9a9a9, #707070); border: solid #333; border-width: 0 1px 1px 0; }
.app svg:first-child { width: 20px; height: 22px; }
.titlebar { display: flex; background: #ccaedd; border-bottom: 1px solid #4d4155; min-width: 0; }
.tools.qat { width: 176px; padding-left: 4px; background: linear-gradient(#878787, #666); }
.tools.qat .drop { flex-basis: 12px; }
.pressed { background: #3f79b5; border: 1px solid #9ac2e8; }
h1 { flex: 1; margin: 0; display: flex; justify-content: center; gap: 8px; font: 8px/13px Roboto, sans-serif; color: #2b2233; white-space: nowrap; }
.info { display: flex; width: 299px; background: linear-gradient(#858585, #666); }
.play { width: 10px; color: #fff; border-right: 1px solid #444; }
.search { width: 120px; padding: 0 3px; border: 0; background: #6b6b6b; font-family: Lato, sans-serif; font-style: italic; border-right: 1px solid #444; }
.search::placeholder { color: #c4c4c4; opacity: 1; }
.info .tools { width: 33px; }
.login { width: 54px; }
.info .help { flex: 1; padding-left: 2px; }
.help .sep { background: none; }
.winbtns { width: 78px; display: flex; padding-left: 12px; font-size: 9px; line-height: 10px; }
.winbtns button { width: 18px; height: 10px; background: linear-gradient(#b8b0c4, #77727e); border: 1px solid #6f6577; border-top: 0; color: #fff; line-height: 8px; }
.winbtns .red { flex: 1; background: linear-gradient(#df8d73, #c2401e); }
.menu { display: flex; gap: 16px; padding-left: 9px; color: #f2f2f2; }
.docbtns { margin-left: auto; display: flex; gap: 4px; padding-right: 1px; color: #222; font-weight: bold; }

.doctabs { flex: none; display: flex; align-items: flex-end; height: 17px; padding-left: 13px; background: #333; }
.doctab { width: 82px; height: 14px; padding-left: 7px; text-align: left; color: #b8b8b8; background: #4b4b4b; border-radius: 7px 7px 0 0; }
.doctab.on { width: 88px; background: linear-gradient(#828282, #5b5b5b); color: #f4f4f4; }
.doctab.on span { color: #333; margin-left: 3px; }
.doctab.add { width: 15px; height: 11px; margin: 0 0 2px 2px; padding: 0; line-height: 10px; text-align: center; font-size: 11px; }

.bars { flex: none; background: #575757; padding: 2px 0 1px 4px; border-bottom: 1px solid #333; }
.row { display: flex; gap: 4px; height: 18px; align-items: center; }
.bar { height: 17px; display: flex; align-items: center; border: solid #3b3b3b; border-width: 0 1px 1px 0; background: #505050; flex: none; }
.one { width: 15px; } .three { width: 47px; } .four { width: 63px; } .five { width: 79px; }
.std { width: 430px; } .solids { width: 235px; } .edit { width: 322px; } .inq { width: 68px; }
.views { width: 217px; } .vis { width: 104px; } .dims { width: 356px; } .lead { width: 87px; }
.views-bar .three { margin-left: 6px; }
.combo { position: relative; display: flex; align-items: center; width: 80px; height: 15px; background: #eeedf8; color: #74747e; flex: none; }
.combo select { flex: 1; min-width: 0; height: 15px; padding: 0 0 0 13px; border: 0; background: none; appearance: none; }
.combo::after { content: ""; width: 6px; height: 4px; margin-right: 3px; background: #9b9ba4; clip-path: polygon(0 0, 100% 0, 50% 100%); }
.combo.near select { padding-left: 4px; }
.mark { display: flex; align-items: center; gap: 1px; padding-left: 2px; }
.mark svg { width: 10px; height: 10px; }
.sw { width: 7px; height: 7px; background: #18a722; border: 1px solid #105a18; margin: 0 2px; }
.combo .mark + select { padding-left: 1px; }
.layer { width: 201px; } .color { width: 100px; } .ltype { width: 107px; } .lweight { width: 83px; } .vp { width: 67px; } .wide { width: 93px; }
.props { gap: 4px; background: none; padding-left: 2px; }
.vports { gap: 5px; }
.ln { height: 1px; background: #555; width: 40px; margin-left: 2px; }
.lweight .ln { width: 23px; margin-left: 1px; }

main { flex: 1; display: flex; min-height: 0; }
aside { flex: 0 0 37px; display: flex; align-items: flex-start; gap: 4px; padding-top: 5px; background: #5a5a5a; border-right: 1px solid #444; }
.vert { flex-direction: column; width: 15px; border: solid #404040; border-width: 1px 1px 1px 0; background: #545454; }
.vert button { width: 13px; }
.draw { height: 311px; } .modify { height: 296px; }
.canvas { position: relative; flex: 1; background: #000; overflow: hidden; }
.axes { position: absolute; left: 7px; bottom: 7px; width: 54px; height: 52px; overflow: visible; fill: none; stroke: #ddd; }

.dialog { position: absolute; left: 573px; top: 113px; width: 326px; padding: 0 3px 3px; background: linear-gradient(#4b4b4b 0, #777 102px, #111 103px); border: 1px solid #c8c8c8; border-radius: 5px; color: #1a1a1a; font: 7px/9px "Liberation Sans", Arial, sans-serif; }
.dialog header { display: flex; align-items: center; height: 18px; margin: 0 -3px; padding-left: 4px; border-radius: 5px 5px 0 0; background: linear-gradient(90deg, #4a4a4a, #7a7a7a 10%, #666 25%, #050505 40%, #111 80%, #444); }
.dialog header svg { width: 10px; height: 10px; background: #fff; margin-right: 4px; }
h2 { flex: 1; margin: 0; font: 8px/18px Roboto, sans-serif; color: #111; }
.close { align-self: flex-start; width: 32px; height: 12px; margin-right: 3px; color: #fff; font-size: 9px; background: linear-gradient(#e5a189, #b8391a 60%, #d8693b); border: 1px solid #eee; border-top: 0; border-radius: 0 0 4px 4px; }
.body { padding: 7px 8px 6px 7px; background: #e8e6f3; border: 1px solid #fafafa; }
.tabs { display: flex; align-items: flex-end; height: 14px; }
.tabs button { flex: none; height: 12px; padding: 0 3px; background: #e9e8f2; border: 1px solid #9a9aa4; border-bottom: 0; text-align: left; }
.tabs .hot { background: #a8dbf5; border-color: #4f95bd; }
.tabs .sel { height: 14px; background: #fafaff; padding-bottom: 2px; }
.tabs .clip { flex: 1 0 auto; padding: 0 1px; }
.tabs .nav { width: 10px; padding: 0 1px; }
.pane { height: 282px; padding: 5px 9px; background: #f9f9fe; border: 1px solid #a4a4b0; }
.pane label { display: flex; align-items: center; gap: 2px; white-space: nowrap; }
.heads { display: flex; height: 13px; align-items: center; }
.heads label { width: 140px; }
input[type=checkbox] { appearance: none; flex: none; width: 9px; height: 9px; background: #e8e8f0; border: 1px solid #8e8e9c; position: relative; }
input[type=checkbox]:checked { background: #dfe3f4; }
input[type=checkbox]:checked::after { content: ""; position: absolute; left: 2px; top: 0; width: 3px; height: 6px; border: solid #2d3c86; border-width: 0 1px 1px 0; transform: rotate(35deg); }
fieldset { margin: 4px 0 0; padding: 0 3px 1px 9px; border: 1px solid #d5d5df; min-width: 0; }
legend { padding: 0 2px; margin-left: -6px; }
.modes { display: grid; grid-template-columns: 119px 83px 1fr; height: 129px; margin-top: 2px; }
ul { list-style: none; margin: 0; padding: 0; display: grid; grid-template-rows: repeat(7, 1fr); }
li { display: flex; align-items: center; gap: 7px; }
li svg { width: 9px; height: 9px; fill: none; stroke: #333; overflow: visible; }
.all { display: flex; flex-direction: column; gap: 5px; padding-top: 2px; width: 66px; }
.dialog .all button, .dialog footer button { height: 14px; background: linear-gradient(#f5f4fb, #d5d4df); border: 1px solid #74747e; border-radius: 2px; }
.dialog .all button { display: flex; align-items: center; justify-content: center; }
.tip { display: flex; gap: 9px; padding: 3px 0 0 6px; }
.tip svg { flex: none; width: 14px; height: 20px; margin-top: 4px; }
.tip p { margin: 0; white-space: nowrap; }
.dialog footer { display: flex; gap: 4px; padding-top: 12px; }
.dialog footer button { width: 49px; height: 15px; }
.dialog footer .opt { margin-right: auto; }
.dialog footer .ok { background: linear-gradient(#e6f6fd, #a6daf3); border: 2px solid #45b3da; }
.cursor { position: absolute; left: 84px; top: 32px; width: 10px; height: 14px; fill: #fff; stroke: #222; }

.cmd { position: absolute; left: 340px; bottom: 0; width: 567px; height: 18px; display: flex; align-items: center; background: #adaeb2; border: 1px solid #77787b; color: #222; }
.cmd .tools { width: 31px; height: 16px; background: #454545; }
.grip { width: 4px; height: 16px; background: repeating-linear-gradient(#777 0 1px, #3c3c3c 1px 2px); }
.cmd label { display: flex; align-items: center; gap: 2px; padding-left: 4px; }
.cmd label span { font: 7px/9px "DejaVu Sans Mono", monospace; border: 1px solid #777; background: #9b9da2; }
.cmd input { flex: 1; border: 0; background: none; padding: 0 4px; font: 8px/12px "DejaVu Sans Mono", monospace; }
.up { width: 7px; height: 7px; fill: #222; }

.status { flex: none; height: 19px; display: flex; background: #333; }
.layouts { flex: 1; display: flex; gap: 2px; padding-left: 6px; }
.layouts button { width: 38px; height: 13px; background: #4a4a4a; color: #aaa; clip-path: polygon(0 0, 100% 0, 90% 100%, 10% 100%); }
.layouts .on { background: #777; color: #fff; font-weight: bold; }
.layouts button:last-child { width: 16px; color: #ddd; font-size: 10px; }
.tray { display: flex; align-items: center; height: 19px; border-top: 1px solid #777; }
.tray > * { height: 18px; background: #484848; border-right: 1px solid #6a6a6a; border-bottom: 1px solid #666; }
.model { width: 34px; border-left: 1px solid #777; color: #f0f0f0; }
.tray .tools button { flex: 0 0 16px; }
.tray .tools .drop { flex: 0 0 11px; }
.tray .drop svg { width: 8px; height: 8px; }
.tray .last { width: 12px; justify-content: center; }
.scale { display: flex; align-items: center; color: #fff; }
.scale > button { padding: 0 2px; }
```
